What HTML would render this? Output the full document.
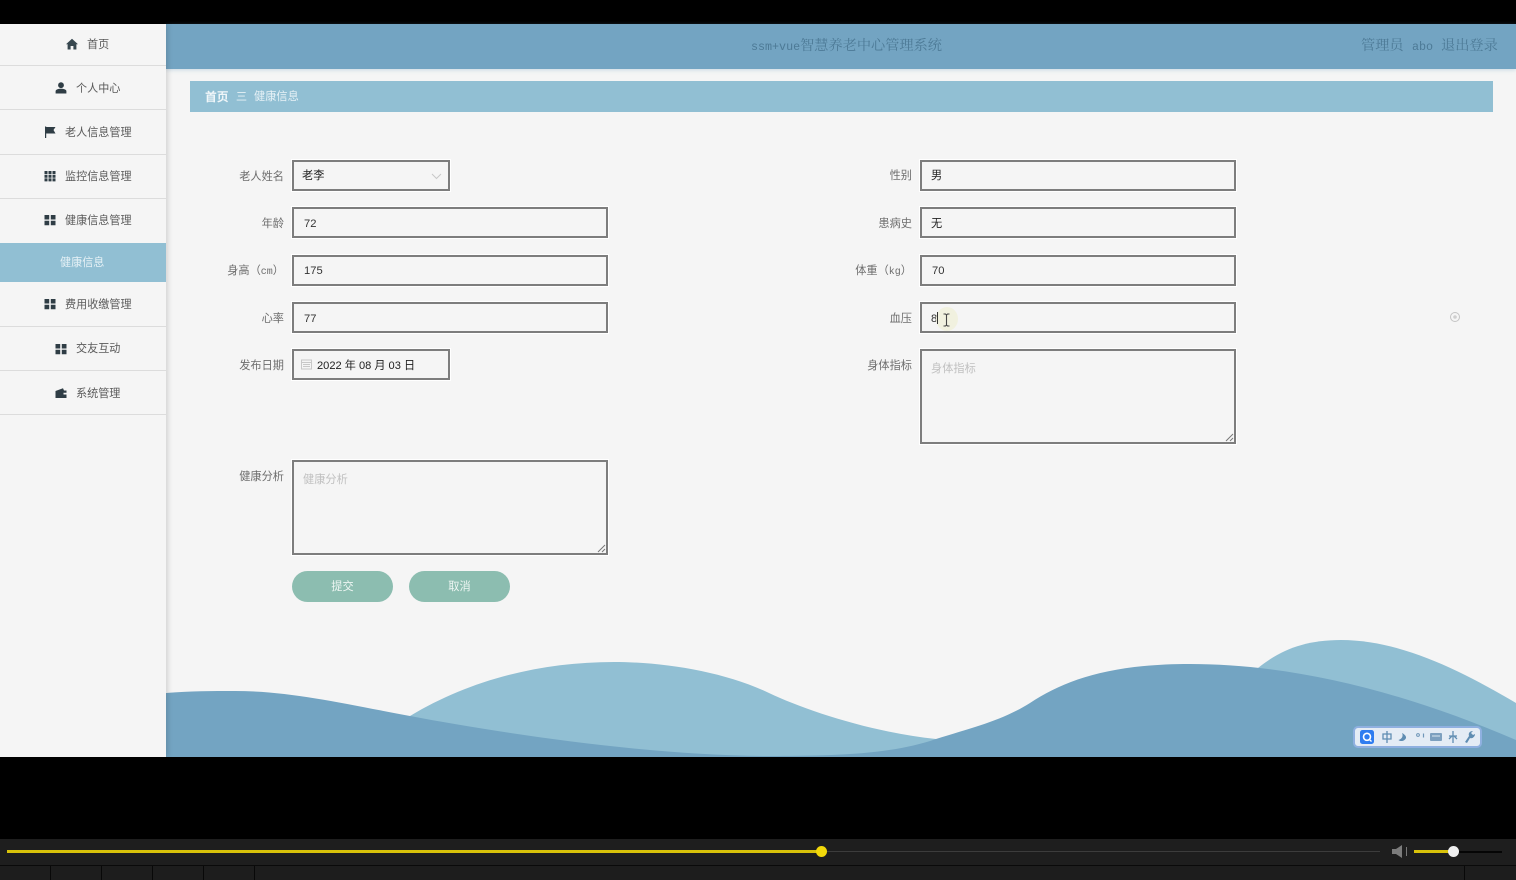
<!DOCTYPE html>
<html lang="zh">
<head>
<meta charset="utf-8">
<title>ssm+vue智慧养老中心管理系统</title>
<style>
html,body{margin:0;padding:0;background:#000;}
body{width:1516px;height:880px;overflow:hidden;position:relative;font-family:"Liberation Sans","Noto Sans CJK SC",sans-serif;}
.a{position:absolute;white-space:nowrap;}
#app{left:0;top:24px;width:1516px;height:733px;background:#f5f5f5;overflow:hidden;}
#waves{position:absolute;left:0;top:0;}
#hdr{left:166px;top:24px;width:1350px;height:45px;background:#73a4c2;box-shadow:0 1px 4px rgba(115,164,194,.35);}
#side{left:0;top:24px;width:166px;height:733px;background:#f5f5f5;box-shadow:2px 0 5px rgba(0,0,0,.14);}
.mi{position:absolute;left:0;width:166px;border-bottom:1px solid #dcdcdc;box-sizing:border-box;}
.mt{position:absolute;font-size:11.1px;line-height:14px;color:#5a5a5a;white-space:nowrap;}
.ic{position:absolute;width:12px;height:12px;}
.lb{position:absolute;font-size:11.2px;line-height:14px;color:#6d6d6d;text-align:right;white-space:nowrap;}
.lb i{font:normal 10px/14px "Liberation Mono",monospace;}
.in{position:absolute;box-sizing:border-box;border:2px solid #7d7d7d;background:#f5f5f5;box-shadow:0 0 0 1px #fff;height:31px;}
.v{position:absolute;left:10px;top:7px;font-size:11.2px;line-height:14px;color:#333;white-space:nowrap;}
.ph{position:absolute;left:9px;top:11px;font-size:11.2px;line-height:14px;color:#c0c0c0;white-space:nowrap;}
.btn{position:absolute;top:571px;width:101px;height:31px;border-radius:16px;background:#8cbdb0;color:#eef6f3;font-size:11.2px;line-height:33px;text-align:center;}
.rz{position:absolute;right:0;bottom:0;width:10px;height:10px;}
.hd{position:absolute;top:36px;font:14.2px/18px "Noto Serif CJK SC",serif;color:#4d7a96;white-space:nowrap;}
.hd i{font:normal 11.7px/18px "Liberation Mono",monospace;}
</style>
</head>
<body>
<div class="a" id="app"></div>
<svg id="waves" width="1516" height="880" viewBox="0 0 1516 880">
<path fill="#91bfd3" d="M410 716 C470 680 540 662 614 662 C665 662 725 672 769 693 C805 710 870 732 936 739 L936 757 L410 757Z"/>
<path fill="#91bfd3" d="M1258 668 C1280 650 1305 640 1341 640 C1400 640 1460 670 1516 703 L1516 757 L1258 757Z"/>
<path fill="#73a4c2" d="M166 693 C190 691 212 691 235 691 C290 691 340 703 410 716 C500 733 650 756 769 756 C830 756 890 755 936 739 C975 727 1003 720 1030 703 C1065 680 1110 664 1190 664 C1290 664 1400 690 1516 740 L1516 757 L166 757Z"/>
</svg>
<div class="a" id="hdr"></div>
<div class="hd" style="left:751px;"><i>ssm+vue</i>智慧养老中心管理系统</div>
<div class="hd" style="left:1361px;">管理员</div>
<div class="hd" style="left:1412px;"><i>abo</i></div>
<div class="hd" style="left:1441px;">退出登录</div>

<div class="a" id="side"></div>
<div class="a" style="left:0;top:24px;width:166px;height:733px;">
  <div class="mi" style="top:0;height:42px;"></div>
  <div class="mi" style="top:42px;height:44px;"></div>
  <div class="mi" style="top:86px;height:45px;"></div>
  <div class="mi" style="top:131px;height:44px;"></div>
  <div class="mi" style="top:175px;height:44px;border:0;"></div>
  <div style="position:absolute;left:0;top:219px;width:166px;height:39px;background:#91bfd3;"></div>
  <div class="mi" style="top:258px;height:45px;"></div>
  <div class="mi" style="top:303px;height:44px;"></div>
  <div class="mi" style="top:347px;height:44px;"></div>
</div>

<svg class="ic" style="left:66px;top:38px" viewBox="0 0 12 12"><path fill="#37474f" d="M6 .8 0 6.200h1.600V11.500h3V8h2.800v3.500h3V6.200H12Z"/></svg>
<div class="mt" style="left:87px;top:38px;">首页</div>
<svg class="ic" style="left:55px;top:82px" viewBox="0 0 12 12"><circle cx="6" cy="3.200" r="2.900" fill="#2f3d45"/><path fill="#2f3d45" d="M.6 11.500V9.200C.6 7.600 3 6.800 6 6.800s5.400.8 5.400 2.400v2.300Z"/></svg>
<div class="mt" style="left:76px;top:82px;">个人中心</div>
<svg class="ic" style="left:44px;top:126px" viewBox="0 0 12 12"><path fill="#2f3d45" d="M1 .5h1.200v11.500H1ZM2 1h9.500L9.500 4l2 3.500H2Z"/></svg>
<div class="mt" style="left:65px;top:126px;">老人信息管理</div>
<svg class="ic" style="left:44px;top:170px" viewBox="0 0 12 12"><path fill="#2f3d45" d="M.5 1h3v3h-3ZM4.500 1h3v3h-3ZM8.500 1h3v3h-3ZM.5 4.700h3v3h-3ZM4.500 4.700h3v3h-3ZM8.500 4.700h3v3h-3ZM.5 8.400h3v3h-3ZM4.500 8.400h3v3h-3ZM8.500 8.400h3v3h-3Z"/></svg>
<div class="mt" style="left:65px;top:170px;">监控信息管理</div>
<svg class="ic" style="left:44px;top:214px" viewBox="0 0 12 12"><path fill="#2f3d45" d="M.5 1h4.700v4.500H.5ZM6.800 1h4.700v4.500H6.800ZM.5 6.800h4.700v4.500H.5ZM6.800 6.800h4.700v4.500H6.800Z"/></svg>
<div class="mt" style="left:65px;top:214px;">健康信息管理</div>
<div class="mt" style="left:60px;top:256px;color:#e6f1f6;">健康信息</div>
<svg class="ic" style="left:44px;top:298px" viewBox="0 0 12 12"><path fill="#2f3d45" d="M.5 1h4.700v4.500H.5ZM6.800 1h4.700v4.500H6.800ZM.5 6.800h4.700v4.500H.5ZM6.800 6.800h4.700v4.500H6.800Z"/></svg>
<div class="mt" style="left:65px;top:298px;">费用收缴管理</div>
<svg class="ic" style="left:55px;top:343px" viewBox="0 0 12 12"><path fill="#2f3d45" d="M.5 1h4.700v4.500H.5ZM6.800 1h4.700v4.500H6.800ZM.5 6.800h4.700v4.500H.5ZM6.800 6.800h4.700v4.500H6.800Z"/></svg>
<div class="mt" style="left:76px;top:342px;">交友互动</div>
<svg class="ic" style="left:55px;top:387px" viewBox="0 0 12 12"><path fill="#2f3d45" d="M.5 4 8 1.200 9 3.500h2.500v2.300H8.500v1.700h3v3.500H.5Z"/></svg>
<div class="mt" style="left:76px;top:387px;">系统管理</div>

<div class="a" style="left:190px;top:81px;width:1303px;height:31px;background:#91bfd3;"></div>
<div class="a" style="left:205px;top:90px;font-size:11.8px;line-height:14px;font-weight:700;color:#f0f6f9;">首页</div>
<div class="a" style="left:236px;top:90px;font-size:11px;line-height:14px;color:#e6f1f6;">三</div>
<div class="a" style="left:254px;top:90px;font-size:11.2px;line-height:14px;color:#e6f1f6;">健康信息</div>

<div class="lb" style="right:1232px;top:170px;">老人姓名</div>
<div class="in" style="left:292px;top:160px;width:158px;"><span class="v" style="left:8px;color:#222;">老李</span>
<svg style="position:absolute;left:137px;top:11px" width="11" height="7" viewBox="0 0 11 7"><path d="M1 1l4.500 4.500L10 1" fill="none" stroke="#c8c8c8" stroke-width="1"/></svg></div>
<div class="lb" style="right:1232px;top:217px;">年龄</div>
<div class="in" style="left:292px;top:207px;width:316px;"><span class="v" style="top:8px;">72</span></div>
<div class="lb" style="right:1232px;top:264px;">身高（<i>cm</i>）</div>
<div class="in" style="left:292px;top:255px;width:316px;"><span class="v">175</span></div>
<div class="lb" style="right:1232px;top:312px;">心率</div>
<div class="in" style="left:292px;top:302px;width:316px;"><span class="v" style="top:8px;">77</span></div>
<div class="lb" style="right:1232px;top:359px;">发布日期</div>
<div class="in" style="left:292px;top:349px;width:158px;">
<svg style="position:absolute;left:7px;top:8px" width="11" height="11" viewBox="0 0 11 11"><rect x=".5" y="1" width="10" height="9" fill="none" stroke="#c8c8c8"/><path d="M.5 3.500h10M2 5.500h7M2 7.500h7" stroke="#c8c8c8" stroke-width="1"/></svg>
<span class="v" style="left:23px;top:8px;color:#222;font-size:11.1px;">2022 年 08 月 03 日</span></div>
<div class="lb" style="right:1232px;top:470px;">健康分析</div>
<div class="in" style="left:292px;top:460px;width:316px;height:95px;"><span class="ph">健康分析</span>
<svg class="rz" viewBox="0 0 10 10"><path d="M2 9 9 2M6 9 9 6" stroke="#777" stroke-width="1"/></svg></div>

<div class="lb" style="right:604px;top:169px;">性别</div>
<div class="in" style="left:920px;top:160px;width:316px;"><span class="v" style="left:9px;color:#222;">男</span></div>
<div class="lb" style="right:604px;top:217px;">患病史</div>
<div class="in" style="left:920px;top:207px;width:316px;"><span class="v" style="left:9px;top:8px;color:#222;">无</span></div>
<div class="lb" style="right:604px;top:264px;">体重（<i>kg</i>）</div>
<div class="in" style="left:920px;top:255px;width:316px;"><span class="v">70</span></div>
<div class="lb" style="right:604px;top:312px;">血压</div>
<div class="in" style="left:920px;top:302px;width:316px;"><span class="v" style="left:9px;top:8px;">8</span>
<div style="position:absolute;left:14px;top:3px;width:22px;height:24px;border-radius:50%;background:#f1f1df;"></div>
<div style="position:absolute;left:15px;top:8px;width:1px;height:12px;background:#333;"></div>
<svg style="position:absolute;left:20px;top:9px" width="9" height="14" viewBox="0 0 9 14"><path d="M1.500 1h2l1 1 1-1h2M4.500 2v10M1.500 13h2l1-1 1 1h2" fill="none" stroke="#444" stroke-width="1.100"/></svg></div>
<div class="lb" style="right:604px;top:359px;">身体指标</div>
<div class="in" style="left:920px;top:349px;width:316px;height:95px;"><span class="ph">身体指标</span>
<svg class="rz" viewBox="0 0 10 10"><path d="M2 9 9 2M6 9 9 6" stroke="#777" stroke-width="1"/></svg></div>

<svg class="a" style="left:1449px;top:311px" width="12" height="12" viewBox="0 0 12 12"><circle cx="6" cy="6" r="4.500" fill="none" stroke="#c4c4c4"/><circle cx="6" cy="6" r="1.800" fill="#cfcfcf"/></svg>

<div class="btn" style="left:292px;">提交</div>
<div class="btn" style="left:409px;">取消</div>

<div class="a" style="left:1353px;top:726px;width:129px;height:22px;box-sizing:border-box;border:2px solid #8fb0e0;border-radius:5px;background:#e4ecf5;"></div>
<svg class="a" style="left:1360px;top:730px" width="116" height="14" viewBox="0 0 116 14">
<rect x="0" y="0" width="14" height="14" rx="2.500" fill="#2f7df0"/><circle cx="7" cy="6.800" r="3.500" fill="none" stroke="#fff" stroke-width="1.600"/><path d="M9 9l2.500 2.500" stroke="#fff" stroke-width="1.300"/>
<path d="M23 4h8v5h-8ZM27 1v12" fill="none" stroke="#5f8db2" stroke-width="1.300"/>
<path d="M42 3c1.500 3 0 6-3.500 7 2 2 6.500 1 7.500-2 .5-2-2-4-4-5Z" fill="#5f8db2"/>
<circle cx="58" cy="5" r="1.400" fill="none" stroke="#6f96b8"/><path d="M63.500 3.500v4" stroke="#6f96b8" stroke-width="1.200"/>
<rect x="70" y="3" width="12" height="8" rx="1" fill="#7da0bf"/><path d="M72 6h8" stroke="#dce7f0"/>
<path d="M93 1v12M89 6h8M89 9l3-3M97 9l-3-3" stroke="#5f8db2" stroke-width="1.300" fill="none"/>
<path d="M105 12l4-6c-1-3 1-5 4-5l-2 2 2 2 2-1c0 3-3 5-5 4l-3 5Z" fill="#5f8db2"/>
</svg>

<div class="a" style="left:0;top:839px;width:1516px;height:26px;background:#1e1e1e;"></div>
<div class="a" style="left:0;top:865px;width:1516px;height:15px;background:#1d1d1d;border-top:1px solid #0a0a0a;box-sizing:border-box;"></div>
<div class="a" style="left:50px;top:866px;width:1px;height:14px;background:#080808;"></div>
<div class="a" style="left:101px;top:866px;width:1px;height:14px;background:#080808;"></div>
<div class="a" style="left:152px;top:866px;width:1px;height:14px;background:#080808;"></div>
<div class="a" style="left:203px;top:866px;width:1px;height:14px;background:#080808;"></div>
<div class="a" style="left:254px;top:866px;width:1px;height:14px;background:#080808;"></div>
<div class="a" style="left:1464px;top:866px;width:1px;height:14px;background:#080808;"></div>
<div class="a" style="left:7px;top:851px;width:1373px;height:1px;background:#3c3c3c;"></div>
<div class="a" style="left:7px;top:850px;width:814px;height:3px;background:#d8c20a;"></div>
<div class="a" style="left:816px;top:846px;width:11px;height:11px;border-radius:50%;background:#f2d80a;"></div>
<svg class="a" style="left:1392px;top:845px" width="16" height="13" viewBox="0 0 16 13"><path d="M0 4h4l6-4v13l-6-4H0Z" fill="#7c7c7c"/><path d="M14.500 2v9" stroke="#777" stroke-width="1"/></svg>
<div class="a" style="left:1414px;top:851px;width:88px;height:2px;background:#050505;"></div>
<div class="a" style="left:1414px;top:850px;width:40px;height:3px;background:#d8c20a;"></div>
<div class="a" style="left:1448px;top:846px;width:11px;height:11px;border-radius:50%;background:#efefef;"></div>
</body>
</html>
